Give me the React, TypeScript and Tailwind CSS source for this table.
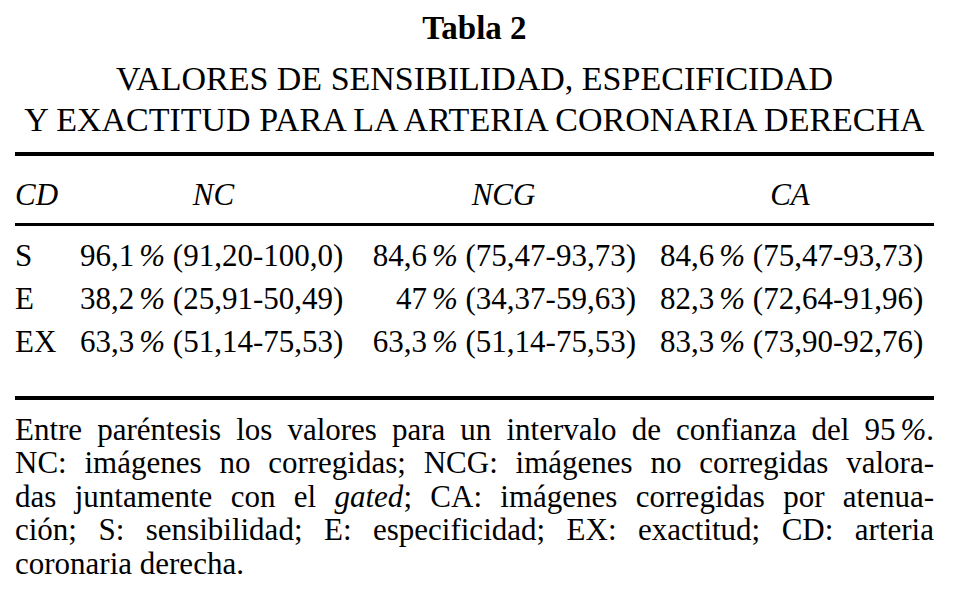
import React from "react";

const serif = "font-['Liberation_Serif','Times_New_Roman',serif]";

function Pct({ v, ci }: { v: string; ci: string }) {
  return (
    <span className="whitespace-nowrap">
      {v}
      <span className="ml-[5px] italic">%</span> ({ci})
    </span>
  );
}

const rows: { k: string; a: [string, string]; b: [string, string]; c: [string, string] }[] = [
  { k: "S", a: ["96,1", "91,20-100,0"], b: ["84,6", "75,47-93,73"], c: ["84,6", "75,47-93,73"] },
  { k: "E", a: ["38,2", "25,91-50,49"], b: ["47", "34,37-59,63"], c: ["82,3", "72,64-91,96"] },
  { k: "EX", a: ["63,3", "51,14-75,53"], b: ["63,3", "51,14-75,53"], c: ["83,3", "73,90-92,76"] },
];

export default function App() {
  return (
    <div className={`w-[956px] h-[612px] bg-white text-black ${serif}`}>
      <div className="w-[919px] ml-[15px] pt-[8px]">
        <div className="text-center font-bold text-[33px] leading-[40px]">Tabla 2</div>
        <div className="mt-[10px] text-center text-[34px] leading-[41px]">
          <div>VALORES DE SENSIBILIDAD, ESPECIFICIDAD</div>
          <div>Y EXACTITUD PARA LA ARTERIA CORONARIA DERECHA</div>
        </div>
        <div className="mt-[12px] h-[4px] bg-black" />
        <div className="text-[31px] leading-[43px]">
          <div className="grid grid-cols-[41px_267px_265px_260px] gap-x-[24px] pt-[17px] pb-[7px] italic">
            <div>CD</div>
            <div className="text-center">NC</div>
            <div className="text-center">NCG</div>
            <div className="text-center">CA</div>
          </div>
          <div className="h-[3px] bg-black" />
          <div className="pt-[8px] pb-[33px]">
            {rows.map((r) => (
              <div key={r.k} className="grid grid-cols-[41px_267px_265px_260px] gap-x-[24px]">
                <div className="whitespace-nowrap">{r.k}</div>
                <div className="text-left">
                  <Pct v={r.a[0]} ci={r.a[1]} />
                </div>
                <div className="text-right">
                  <Pct v={r.b[0]} ci={r.b[1]} />
                </div>
                <div className="text-left">
                  <Pct v={r.c[0]} ci={r.c[1]} />
                </div>
              </div>
            ))}
          </div>
        </div>
        <div className="h-[4px] bg-black" />
        <div className="pt-[13px] text-[31px] leading-[33.4px]">
          <div className="text-justify [text-align-last:justify] whitespace-nowrap">
            Entre paréntesis los valores para un intervalo de confianza del 95<span className="ml-[5px] italic">%</span>.
          </div>
          <div className="text-justify [text-align-last:justify]">
            NC: imágenes no corregidas; NCG: imágenes no corregidas valora-
          </div>
          <div className="text-justify [text-align-last:justify]">
            das juntamente con el <i>gated</i>; CA: imágenes corregidas por atenua-
          </div>
          <div className="text-justify [text-align-last:justify]">
            ción; S: sensibilidad; E: especificidad; EX: exactitud; CD: arteria
          </div>
          <div>coronaria derecha.</div>
        </div>
      </div>
    </div>
  );
}
